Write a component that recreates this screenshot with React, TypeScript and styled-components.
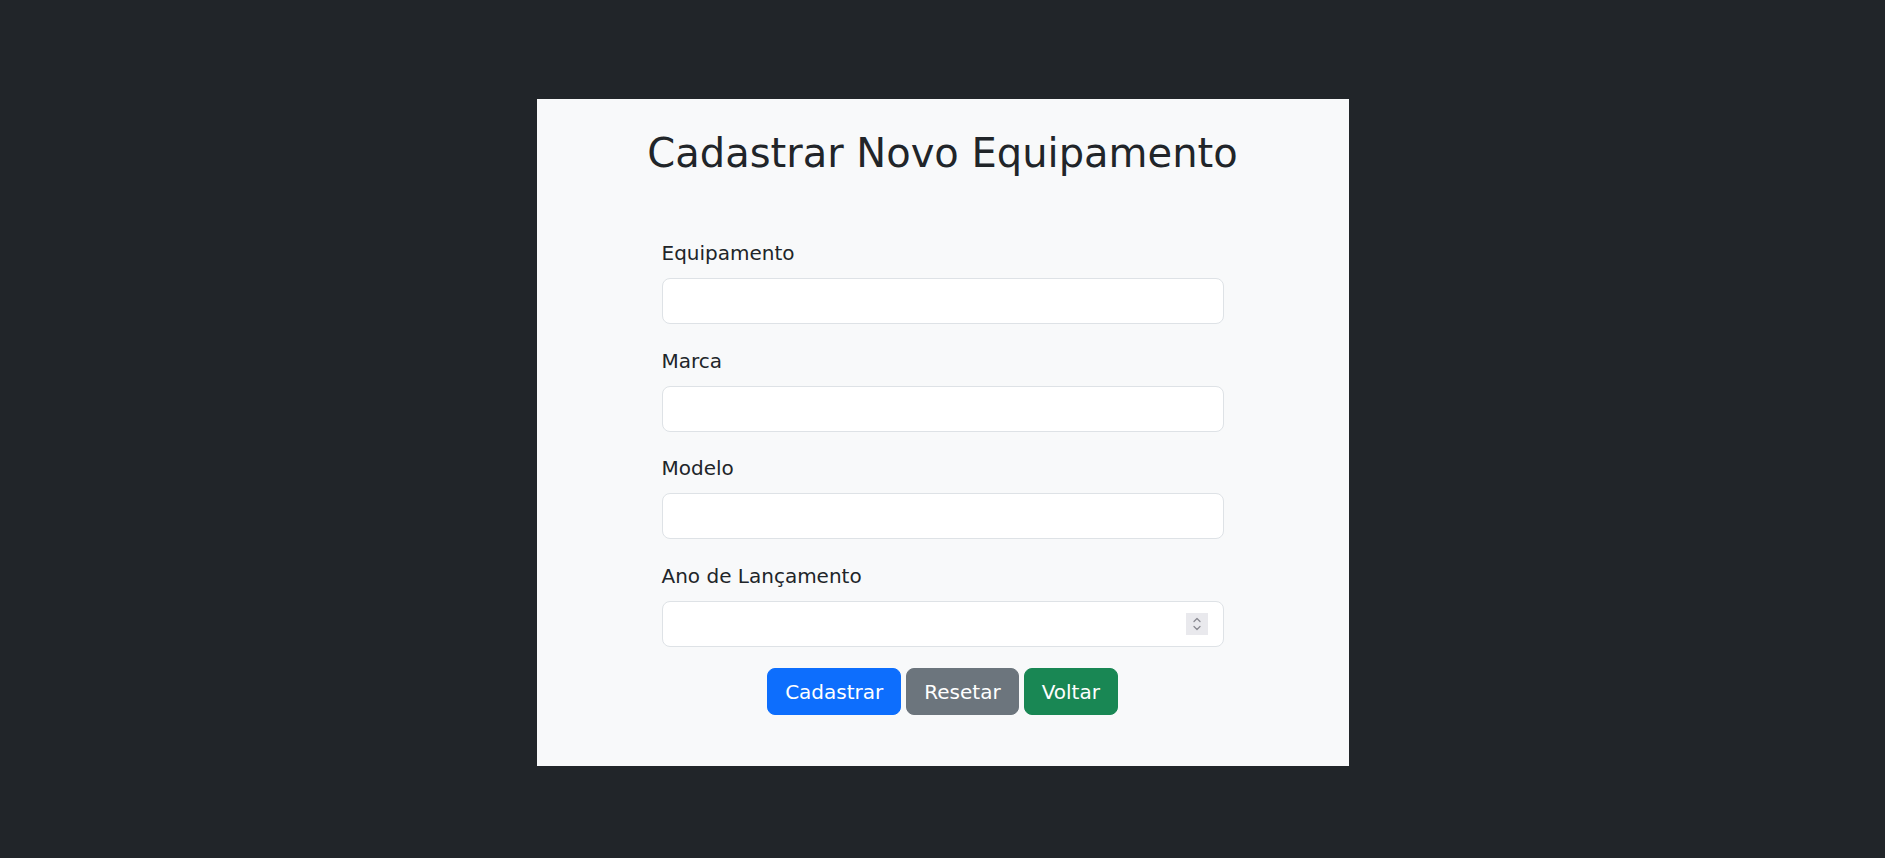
import styled, { createGlobalStyle } from 'styled-components'

const GlobalStyle = createGlobalStyle`
  html, body {
    margin: 0;
    padding: 0;
    background: #212529;
  }
  body {
    font-family: "DejaVu Sans", "Noto Sans", sans-serif;
    color: #212529;
  }
  * {
    box-sizing: border-box;
  }
`

export default function App() {
  return (
    <Page>
      <GlobalStyle />
      <Card>
        <Title>Cadastrar Novo Equipamento</Title>
        <Form onSubmit={(e) => e.preventDefault()}>
          <Field>
            <Label htmlFor="equipamento">Equipamento</Label>
            <Input id="equipamento" type="text" />
          </Field>
          <Field>
            <Label htmlFor="marca">Marca</Label>
            <Input id="marca" type="text" />
          </Field>
          <Field>
            <Label htmlFor="modelo">Modelo</Label>
            <Input id="modelo" type="text" />
          </Field>
          <Field>
            <Label htmlFor="ano">Ano de Lançamento</Label>
            <InputWrap>
              <Input id="ano" type="text" inputMode="numeric" />
              <Spinner>
                <svg width="10" height="16" viewBox="0 0 10 16" fill="none" stroke="#8a8a92" strokeWidth="1.3" strokeLinecap="round" strokeLinejoin="round">
                  <polyline points="2,5.5 5,2.5 8,5.5" />
                  <polyline points="2,10.5 5,13.5 8,10.5" />
                </svg>
              </Spinner>
            </InputWrap>
          </Field>
          <Buttons>
            <Button type="submit" $variant="primary">Cadastrar</Button>
            <Button type="reset" $variant="secondary">Resetar</Button>
            <Button type="button" $variant="success">Voltar</Button>
          </Buttons>
        </Form>
      </Card>
    </Page>
  )
}

const colors: Record<string, string> = {
  primary: '#0d6efd',
  secondary: '#6c757d',
  success: '#198754',
}

const Page = styled.div`
  min-height: 100vh;
  padding-top: 99px;
  display: flex;
  justify-content: center;
  align-items: flex-start;
`

const Card = styled.div`
  width: 812px;
  background: #f8f9fa;
  padding: 30px 0 51px;
  display: flex;
  flex-direction: column;
  align-items: center;
`

const Title = styled.h1`
  margin: 0 0 61px;
  font-size: 40px;
  font-weight: 400;
  line-height: 48px;
  color: #212529;
`

const Form = styled.form`
  width: 562px;
  display: flex;
  flex-direction: column;
  gap: 21.5px;
`

const Field = styled.div`
  display: flex;
  flex-direction: column;
`

const Label = styled.label`
  font-size: 20px;
  line-height: 30px;
  margin-bottom: 10px;
  color: #212529;
`

const InputWrap = styled.div`
  position: relative;
`

const Input = styled.input`
  width: 100%;
  height: 46px;
  padding: 0 16px;
  font-family: inherit;
  font-size: 20px;
  color: #212529;
  background: #fff;
  border: 1px solid #dee2e6;
  border-radius: 8px;
  outline: none;
`

const Spinner = styled.span`
  position: absolute;
  top: 12px;
  right: 16px;
  width: 22px;
  height: 22px;
  background: #e9e9ed;
  display: flex;
  align-items: center;
  justify-content: center;
  pointer-events: none;
`

const Buttons = styled.div`
  display: flex;
  justify-content: center;
  gap: 5px;
`

const Button = styled.button<{ $variant: string }>`
  height: 47px;
  padding: 0 17px;
  font-family: inherit;
  font-size: 20px;
  color: #fff;
  background: ${(p) => colors[p.$variant]};
  border: 1px solid ${(p) => colors[p.$variant]};
  border-radius: 8px;
  cursor: pointer;
`
